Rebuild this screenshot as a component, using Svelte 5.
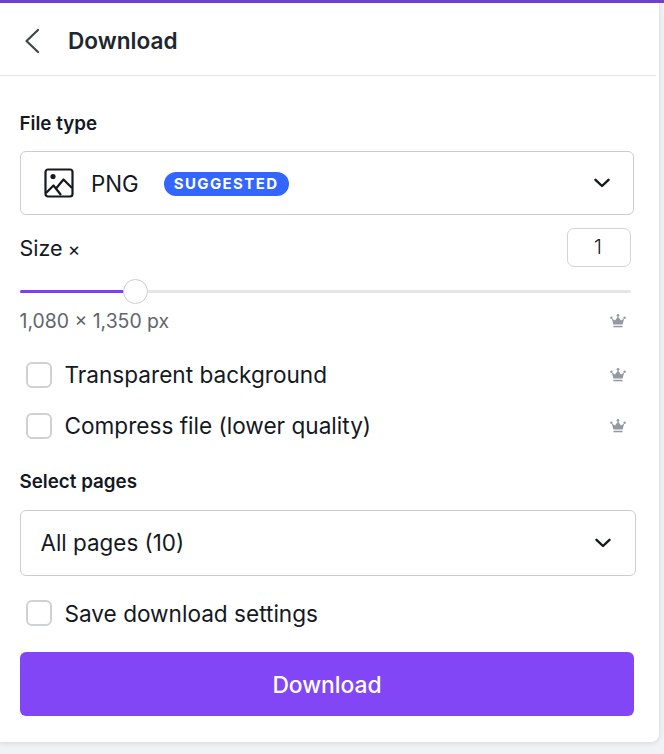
<script lang="ts">
	const options = [
		{ label: 'Transparent background', premium: true },
		{ label: 'Compress file (lower quality)', premium: true }
	];
</script>

{#snippet crown()}
	<svg class="crown" viewBox="0 0 16 16" width="16" height="16" aria-hidden="true">
		<circle cx="8" cy="2.4" r="1.4" />
		<circle cx="1.4" cy="4.8" r="1.2" />
		<circle cx="14.6" cy="4.8" r="1.2" />
		<path d="M1.8 5.4 5 7.4 8 3.4 11 7.4 14.2 5.4 12.6 11.6H3.4Z" />
		<rect x="3.4" y="12.8" width="9.2" height="1.5" />
	</svg>
{/snippet}

{#snippet chevron()}
	<svg class="chevron" viewBox="0 0 16 10" width="16" height="10" aria-hidden="true">
		<path d="M1.5 1.8 8 8 14.5 1.8" />
	</svg>
{/snippet}

<div class="page">
	<div class="accent"></div>
	<section class="panel">
		<header class="header">
			<svg class="back" viewBox="0 0 16 26" width="16" height="26" aria-hidden="true">
				<path d="M14 2 2.5 13 14 24" />
			</svg>
			<h1>Download</h1>
		</header>

		<div class="body">
			<h2 class="file-label">File type</h2>
			<button class="select file-select">
				<svg class="image-icon" viewBox="0 0 30 30" width="30" height="30" aria-hidden="true">
					<rect x="1.5" y="1.5" width="27" height="27" rx="2.5" />
					<circle cx="9" cy="8.5" r="2.6" class="dot" />
					<path d="M2 25 9.5 17.5 17 27M12 20.5 19.5 11.5 28 20" />
				</svg>
				<span class="png">PNG</span>
				<span class="badge">SUGGESTED</span>
				<span class="grow"></span>
				{@render chevron()}
			</button>

			<div class="size-row">
				<span class="size-label">Size <span class="times">×</span></span>
				<span class="size-input">1</span>
			</div>
			<div class="slider">
				<div class="fill"></div>
				<div class="thumb"></div>
			</div>
			<div class="dimensions">
				<span>1,080 × 1,350 px</span>
				{@render crown()}
			</div>

			<div class="options">
				{#each options as option}
					<div class="option">
						<span class="box"></span>
						<span class="grow option-text">{option.label}</span>
						{#if option.premium}
							{@render crown()}
						{/if}
					</div>
				{/each}
			</div>

			<h2 class="pages-label">Select pages</h2>
			<button class="select pages-select">
				<span class="grow option-text">All pages (10)</span>
				{@render chevron()}
			</button>

			<div class="option save">
				<span class="box"></span>
				<span>Save download settings</span>
			</div>

			<button class="download">Download</button>
		</div>
	</section>
</div>

<style>
	:global(body) {
		margin: 0;
		background: #f1f2f5;
	}

	.page {
		width: 664px;
		height: 754px;
		overflow: hidden;
		font-family: Inter, 'Noto Sans', sans-serif;
		color: #14191f;
	}

	.accent {
		height: 3px;
		background: #6f3fd6;
	}

	.panel {
		width: 659px;
		height: 739px;
		box-sizing: border-box;
		background: #fff;
		border-radius: 0 0 8px 0;
		box-shadow: 0 1px 5px rgba(60, 66, 87, 0.16);
	}

	.header {
		display: flex;
		align-items: center;
		height: 72px;
		margin-right: 3px;
		padding-left: 24px;
		border-bottom: 1px solid #e6e7ea;
	}

	.back {
		fill: none;
		stroke: #3f454c;
		stroke-width: 2.2;
		stroke-linecap: round;
		stroke-linejoin: round;
		margin-top: 3px;
	}

	h1 {
		margin: 3px 0 0 28px;
		font-size: 22.6px;
		font-weight: 600;
		color: #20262d;
	}

	.body {
		padding: 0 25px 0 20px;
	}

	h2 {
		margin: 0 0 0 -0.5px;
		font-size: 18.8px;
		line-height: 24px;
		font-weight: 600;
	}

	.file-label {
		padding-top: 36px;
	}

	.select {
		display: flex;
		align-items: center;
		width: 100%;
		box-sizing: border-box;
		background: #fff;
		border: 1px solid #c9ccd2;
		border-radius: 6px;
		font: inherit;
		color: inherit;
		text-align: left;
	}

	.file-select {
		height: 64px;
		margin-top: 15px;
		padding: 0 23px;
	}

	.image-icon {
		fill: none;
		stroke: #14191f;
		stroke-width: 2.2;
		stroke-linejoin: round;
	}

	.image-icon .dot {
		fill: #14191f;
		stroke: none;
	}

	.png {
		margin-left: 17px;
		font-size: 22.3px;
		font-weight: 400;
	}

	.badge {
		margin: 1px 0 0 25px;
		padding: 0 10px;
		height: 24px;
		line-height: 24px;
		border-radius: 12px;
		background: #3366ff;
		color: #fff;
		font-size: 15px;
		font-weight: 700;
		letter-spacing: 1.4px;
	}

	.grow {
		flex: 1;
	}

	.option-text {
		padding-bottom: 2px;
	}

	.chevron {
		fill: none;
		stroke: #14191f;
		stroke-width: 2.4;
		stroke-linecap: round;
		stroke-linejoin: round;
	}

	.size-row {
		display: flex;
		align-items: center;
		justify-content: space-between;
		margin-top: 13px;
		margin-right: 3px;
		font-size: 21px;
	}

	.size-label {
		font-size: 21.5px;
		margin-left: -0.5px;
	}

	.times {
		font-size: 19px;
		margin-left: -1px;
	}

	.size-input {
		width: 64px;
		height: 39px;
		box-sizing: border-box;
		padding-right: 2px;
		border: 1px solid #d2d4d9;
		border-radius: 7px;
		font-size: 20px;
		font-weight: 300;
		line-height: 37px;
		text-align: center;
	}

	.slider {
		position: relative;
		height: 3px;
		margin: 23px 3px 0 0;
		background: #e4e6ea;
		border-radius: 2px;
	}

	.fill {
		width: 104px;
		height: 100%;
		background: #7d3cf5;
		border-radius: 2px;
	}

	.thumb {
		position: absolute;
		left: 103px;
		top: -11px;
		width: 25px;
		height: 25px;
		box-sizing: border-box;
		background: #fff;
		border: 1px solid #c9ccd2;
		border-radius: 50%;
	}

	.dimensions {
		display: flex;
		align-items: center;
		justify-content: space-between;
		margin: 16px 0 0 -0.5px;
		height: 24px;
		font-size: 19.4px;
		color: #5f666e;
	}

	.crown {
		fill: #9498a0;
		flex: none;
		margin-right: 8px;
	}

	.options {
		display: flex;
		flex-direction: column;
		gap: 23px;
		margin-top: 28px;
	}

	.option {
		display: flex;
		align-items: center;
		height: 28px;
		padding-left: 6px;
		font-size: 22.6px;
	}

	.box {
		flex: none;
		width: 26px;
		height: 26px;
		margin-right: 12.5px;
		box-sizing: border-box;
		border: 2px solid #ced1d6;
		border-radius: 6px;
		background: #fff;
	}

	.pages-label {
		margin-top: 30px;
	}

	.pages-select {
		width: calc(100% + 2px);
		height: 66px;
		margin-top: 16px;
		padding: 0 24px 0 19.5px;
		font-size: 22.4px;
	}

	.save {
		margin-top: 23px;
	}

	.download {
		display: block;
		width: 100%;
		height: 64px;
		margin-top: 25px;
		border: 0;
		border-radius: 6px;
		background: #8246f6;
		color: #fff;
		font: inherit;
		font-size: 22.8px;
		font-weight: 500;
	}
</style>
